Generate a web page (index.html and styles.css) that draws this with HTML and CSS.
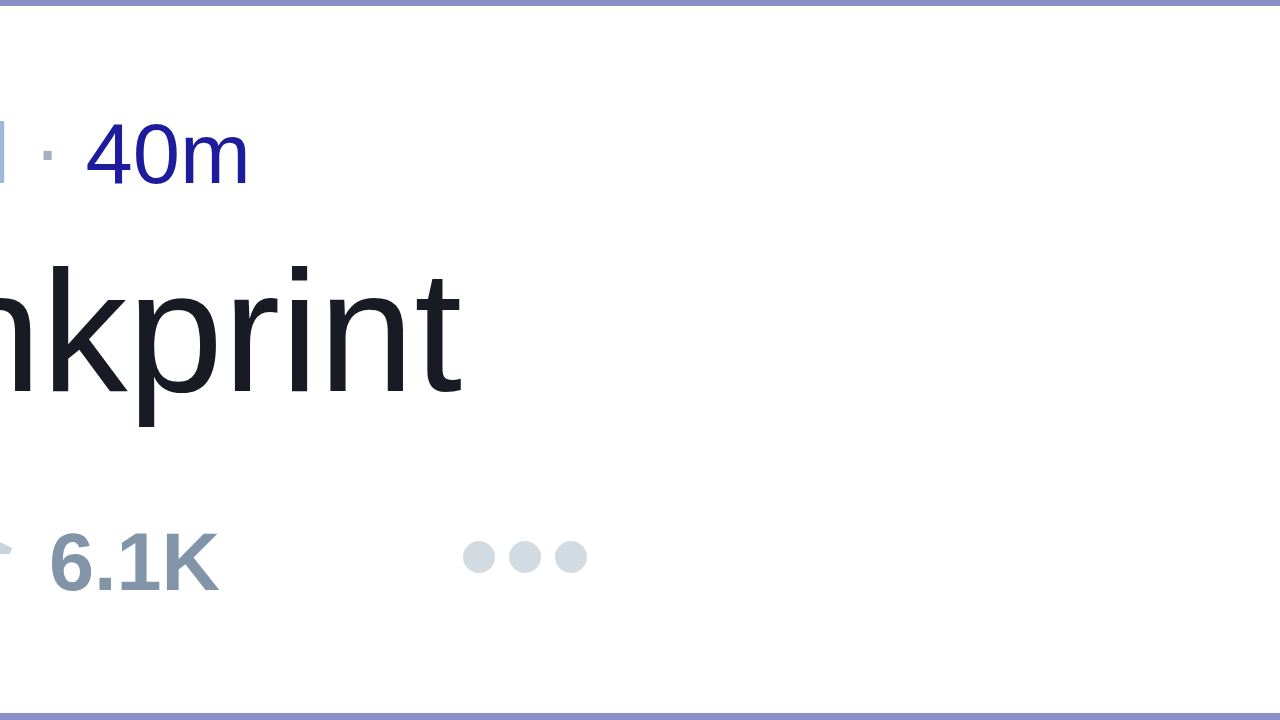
FILE: index.html
```html
<!DOCTYPE html>
<html lang="en">
<head>
    <meta charset="UTF-8">
    <meta name="viewport" content="width=device-width, initial-scale=1.0">
    <title>Post</title>
    <link rel="stylesheet" href="styles.css">
</head>
<body>
    <div class="card">
        <!-- Handle and time -->
        <div class="meta"><span class="handle">l</span> <span class="sep">·</span> <span class="time">40m</span></div>

        <!-- Post text -->
        <div class="title">Inkprint</div>

        <!-- Stats row -->
        <div class="stats">
            <svg class="stat-icon" viewBox="0 0 40 40" width="40" height="40">
                <path d="M6 12 L22 4 L38 12 L36 18 L8 18 Z" fill="#c9d3dc"/>
            </svg>
            <span class="count">6.1K</span>
            <div class="more">
                <span class="dot"></span>
                <span class="dot"></span>
                <span class="dot"></span>
            </div>
        </div>
    </div>
</body>
</html>
```

FILE: styles.css
```css
/* General */
body {
    margin: 0;
    background-color: #ffffff;
    font-family: "Liberation Sans", Arial, sans-serif;
    overflow: hidden;
}

.card {
    height: 720px;
    box-sizing: border-box;
    border-top: 6px solid #8a8fc8;
    border-bottom: 7px solid #8a8fc8;
    padding-top: 98px;
    overflow: hidden;
}

/* Meta line */
.meta {
    margin-left: -9px;
    font-size: 85px;
    line-height: 100px;
    color: #1c1c9c;
    white-space: nowrap;
}

.handle {
    color: #9dbbd8;
}

.sep {
    color: #a7b0bf;
    position: relative;
    top: -4px;
}

/* Post text */
.title {
    margin-top: 27px;
    margin-left: -102px;
    font-size: 172px;
    line-height: 200px;
    color: #181b24;
    white-space: nowrap;
}

/* Stats */
.stats {
    margin-top: 81px;
    display: flex;
    align-items: flex-start;
    height: 100px;
}

.stat-icon {
    margin-left: -26px;
    margin-top: 24px;
}

.count {
    margin-left: 35px;
    font-size: 81px;
    font-weight: 700;
    line-height: 100px;
    color: #8294a7;
}

.more {
    display: flex;
    gap: 14px;
    margin-left: 243px;
    margin-top: 29px;
}

.dot {
    width: 32px;
    height: 32px;
    border-radius: 50%;
    background-color: #d3dbe2;
}
```
